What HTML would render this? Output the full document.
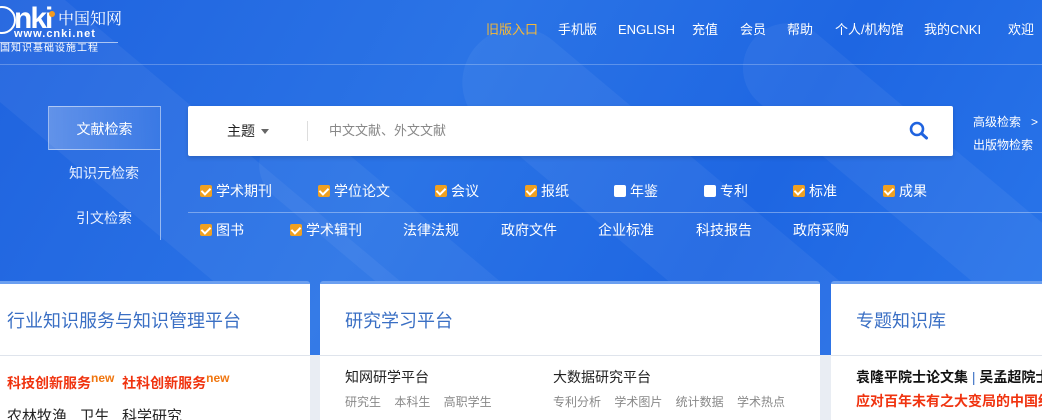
<!DOCTYPE html>
<html><head><meta charset="utf-8"><style>
*{margin:0;padding:0;box-sizing:border-box}
html,body{width:1042px;height:420px;overflow:hidden}
body{font-family:"Liberation Sans","Noto Sans CJK SC",sans-serif;background:#e9edf3;position:relative}
.bg{position:absolute;left:0;top:0;width:1042px;height:355px;background:linear-gradient(120deg,#1f63df 0%,#2b74e6 40%,#1e66e2 70%,#2a76ea 100%);overflow:hidden}
.bg .s{position:absolute;background:rgba(255,255,255,0.05);transform:rotate(-50deg);border-radius:60px}
.a{position:absolute;white-space:nowrap}
.nav{top:21px;font-size:13px;color:#fff;line-height:18px;height:18px}
.hl{position:absolute;left:0;top:64px;width:1042px;height:1px;background:rgba(255,255,255,0.25)}
.tab{position:absolute;left:48px;width:112px;height:44px;color:#e8f0ff;font-size:14px;text-align:center;line-height:44px}
.search{position:absolute;left:188px;top:106px;width:765px;height:50px;background:#fff;border-radius:2px;box-shadow:0 2px 4px rgba(0,0,0,0.15)}
.cb{position:absolute;font-size:14px;color:#fff;top:182px;line-height:18px}
.cb i{display:inline-block;width:12px;height:12px;background:#f0a020;border-radius:2px;vertical-align:-1px;margin-right:4px;position:relative}
.cb i.w{background:#fff}
.cb i:not(.w):after{content:"";position:absolute;left:3px;top:1px;width:4px;height:7px;border:solid #fff;border-width:0 2px 2px 0;transform:rotate(45deg)}
.card{position:absolute;top:281px;height:139px;background:#fff;border-top:3px solid #6b9ff0;border-radius:3px 3px 0 0;overflow:hidden}
.card .h{position:absolute;top:0;left:0;right:0;height:72px;border-bottom:1px solid #dfe4ec}
.card .t{position:absolute;top:26px;font-size:18px;color:#3a6fc4;line-height:22px}
sup{font-size:12px;color:#f0760f;vertical-align:6px;line-height:0}
</style></head><body>
<div class="bg">
<div class="s" style="left:150px;top:-100px;width:120px;height:600px"></div>
<div class="s" style="left:650px;top:-60px;width:110px;height:600px"></div>
<div class="s" style="left:900px;top:-50px;width:90px;height:500px"></div>
<div class="s" style="left:420px;top:50px;width:80px;height:500px"></div>
</div>
<div class="a" style="left:-12px;top:6px;width:28px;height:28px;border:2px solid #fff;border-radius:50%"></div>
<div class="a" style="left:14px;top:2px;font-size:30px;font-weight:bold;color:#fff;letter-spacing:-2px;line-height:34px">nki</div>
<div class="a" style="left:49px;top:11px;width:6px;height:6px;background:#f39a1d;border-radius:50%"></div>
<div class="a" style="left:58px;top:8px;font-size:16px;color:#fff;font-family:'Noto Serif CJK SC',serif;line-height:20px">中国知网</div>
<div class="a" style="left:14px;top:28px;font-size:11px;color:#fff;font-weight:bold;letter-spacing:1px;line-height:13px">www.cnki.net</div>
<div class="a" style="left:0;top:42px;width:118px;height:1px;background:rgba(255,255,255,0.6)"></div>
<div class="a" style="left:0;top:43px;font-size:10px;color:#fff;letter-spacing:1px;line-height:12px">国知识基础设施工程</div>
<div class="a nav" style="left:486px;color:#f6b936">旧版入口</div>
<div class="a nav" style="left:558px">手机版</div>
<div class="a nav" style="left:618px">ENGLISH</div>
<div class="a nav" style="left:692px">充值</div>
<div class="a nav" style="left:740px">会员</div>
<div class="a nav" style="left:787px">帮助</div>
<div class="a nav" style="left:835px">个人/机构馆</div>
<div class="a nav" style="left:924px">我的CNKI</div>
<div class="a nav" style="left:1008px">欢迎</div>
<div class="hl"></div>
<div class="tab" style="top:106px;border:1px solid rgba(255,255,255,0.5);border-right:none;background:linear-gradient(90deg,rgba(255,255,255,0.25),rgba(255,255,255,0.05));color:#fff">文献检索</div>
<div class="tab" style="top:151px">知识元检索</div>
<div class="tab" style="top:196px">引文检索</div>
<div class="a" style="left:160px;top:106px;width:1px;height:134px;background:rgba(255,255,255,0.5)"></div>
<div class="search">
<div class="a" style="left:39px;top:16px;font-size:14px;color:#222;line-height:18px">主题</div>
<div class="a" style="left:73px;top:23px;border:4px solid transparent;border-top:5px solid #666"></div>
<div class="a" style="left:119px;top:15px;width:1px;height:20px;background:#ddd"></div>
<div class="a" style="left:141px;top:16px;font-size:13px;color:#888;line-height:18px">中文文献、外文文献</div>
<svg class="a" style="left:721px;top:15px" width="20" height="20" viewBox="0 0 20 20"><circle cx="8" cy="8" r="6" fill="none" stroke="#1f63df" stroke-width="2.6"/><path d="M12.5 12.5L17.5 17" stroke="#1f63df" stroke-width="3" stroke-linecap="round"/></svg>
</div>
<div class="a" style="left:973px;top:114px;font-size:12px;color:#fff;line-height:16px">高级检索 &nbsp;&nbsp;&gt;</div>
<div class="a" style="left:973px;top:137px;font-size:12px;color:#fff;line-height:16px">出版物检索</div>
<div class="cb" style="left:200px"><i></i>学术期刊</div>
<div class="cb" style="left:318px"><i></i>学位论文</div>
<div class="cb" style="left:435px"><i></i>会议</div>
<div class="cb" style="left:525px"><i></i>报纸</div>
<div class="cb" style="left:614px"><i class="w"></i>年鉴</div>
<div class="cb" style="left:704px"><i class="w"></i>专利</div>
<div class="cb" style="left:793px"><i></i>标准</div>
<div class="cb" style="left:883px"><i></i>成果</div>
<div class="a" style="left:188px;top:212px;width:854px;height:1px;background:rgba(255,255,255,0.35)"></div>
<div class="cb" style="left:200px;top:221px"><i></i>图书</div>
<div class="cb" style="left:290px;top:221px"><i></i>学术辑刊</div>
<div class="cb" style="left:403px;top:221px">法律法规</div>
<div class="cb" style="left:501px;top:221px">政府文件</div>
<div class="cb" style="left:598px;top:221px">企业标准</div>
<div class="cb" style="left:696px;top:221px">科技报告</div>
<div class="cb" style="left:793px;top:221px">政府采购</div>

<div class="card" style="left:-5px;width:315px"><div class="h"><div class="t" style="left:12px">行业知识服务与知识管理平台</div></div>
<div class="a" style="left:12px;top:90px;font-size:14px;color:#f0330f;font-weight:bold;line-height:18px">科技创新服务<sup>new</sup>&nbsp; 社科创新服务<sup>new</sup></div>
<div class="a" style="left:12px;top:124px;font-size:15px;color:#222;line-height:18px">农林牧渔 &nbsp; 卫生 &nbsp; 科学研究</div></div>
<div class="card" style="left:320px;width:500px"><div class="h"><div class="t" style="left:25px">研究学习平台</div></div>
<div class="a" style="left:25px;top:84px;font-size:14px;color:#222;line-height:18px">知网研学平台</div>
<div class="a" style="left:233px;top:84px;font-size:14px;color:#222;line-height:18px">大数据研究平台</div>
<div class="a" style="left:25px;top:110px;font-size:12px;color:#888;word-spacing:10px;line-height:16px">研究生 本科生 高职学生</div>
<div class="a" style="left:233px;top:110px;font-size:12px;color:#888;word-spacing:10px;line-height:16px">专利分析 学术图片 统计数据 学术热点</div></div>
<div class="card" style="left:831px;width:216px"><div class="h"><div class="t" style="left:25px">专题知识库</div></div>
<div class="a" style="left:25px;top:84px;font-size:14px;color:#111;font-weight:bold;line-height:18px">袁隆平院士论文集 <span style="color:#3a6fc4;font-weight:normal">|</span> 吴孟超院士</div>
<div class="a" style="left:25px;top:108px;font-size:14px;color:#f0330f;font-weight:bold;line-height:18px">应对百年未有之大变局的中国经</div></div>
</body></html>
